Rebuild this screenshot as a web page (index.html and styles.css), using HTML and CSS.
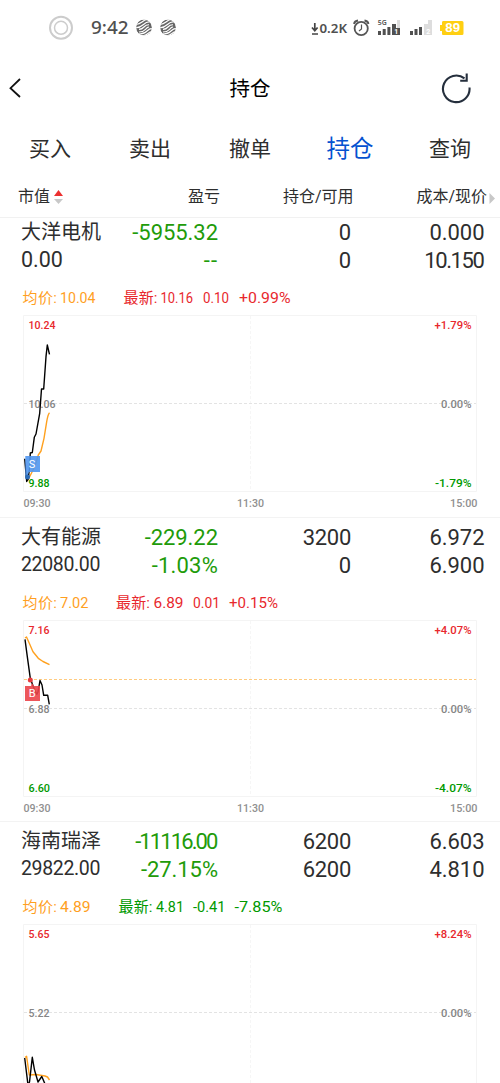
FILE: index.html
```html
<!DOCTYPE html>
<html lang="zh-CN">
<head>
<meta charset="utf-8">
<title>持仓</title>
<link rel="stylesheet" href="styles.css">
</head>
<body>
<main class="app">
  <header class="status">
    <svg width="500" height="56" viewBox="0 0 500 56">
      <defs>
        <clipPath id="globe"><circle r="8"/></clipPath>
        <g id="carrier" clip-path="url(#globe)">
          <circle r="8" fill="#666"/>
          <path d="M-9-3Q-5-3-2-5.500T4-8M-8 .2Q-4 .2-.5-3T6-5.500M-5 1.800Q-2 1.800 0-.5T5-2.700M-5 4.500Q-1 4.500 1.500 1.800T5-.2M-6 6.500Q0 6.500 3 3.500T9 1M-2 8.500Q2 8 4 6T8 4" fill="none" stroke="#fff" stroke-width="1.150"/>
        </g>
      </defs>
      <g fill="none" stroke="#ccc"><circle cx="61" cy="27.800" r="11" stroke-width="2"/><circle cx="61" cy="27.800" r="6.500" stroke-width="1.500"/></g>
      <text class="clock" x="91" y="34" textLength="37.500" lengthAdjust="spacingAndGlyphs">9:42</text>
      <use href="#carrier" x="144" y="27.500"/><use href="#carrier" x="168" y="27.500"/>
      <path d="M314.800 23v7M312 27.500l2.800 3.300 2.800-3.300M312 34h6" fill="none" stroke="#444" stroke-width="1.700"/>
      <text class="speed" x="319.500" y="32.700" textLength="27.500" lengthAdjust="spacingAndGlyphs">0.2K</text>
      <g fill="none" stroke="#555" stroke-width="1.800"><circle cx="361.200" cy="28.500" r="6.600"/><path d="M354 24q.5-3 4-3.500M368.500 24q-.5-3-4-3.500"/><path d="M361.500 24.500v4.500l-2.500 2" stroke-width="1.200"/></g>
      <text class="tiny" x="377.800" y="25" textLength="9" lengthAdjust="spacingAndGlyphs">5G</text>
      <path d="M378 31h3v4h-3zM382.700 29h3v6h-3zM387.400 27h3v8h-3zM392 24h4v4h4v7h-8z" fill="#505050"/>
      <path d="M397 20h3v8h-3z" fill="#ddd"/><text class="sim" x="394.200" y="33.700">1</text>
      <path d="M410 31h3v4h-3zM414.500 29h3v6h-3zM419 27h3v8h-3z" fill="#505050"/>
      <path d="M424 24h4v-4h4v15h-8z" fill="#ddd"/><text class="sim" x="426.200" y="34">2</text>
      <path d="M443 21h19q1.500 0 1.500 1.500v11q0 1.500-1.500 1.500h-19q-1 0-1-1.500v-2.500h-2v-6h2v-2.500q0-1.500 1-1.500z" fill="#ffcf12"/>
      <text class="battery" x="445.300" y="32.400" textLength="14.700" lengthAdjust="spacingAndGlyphs">89</text>
    </svg>
  </header>

  <div class="titlebar">
    <svg class="back" width="14" height="20" viewBox="0 0 14 20"><path d="M12 1L2.500 10.200 12 19" fill="none" stroke="#111" stroke-width="1.800"/></svg>
    <h1>持仓</h1>
    <svg class="refresh" width="32" height="32" viewBox="0 0 32 32"><path d="M29.500 15.500A13.300 13.300 0 1 1 24.500 6.400" fill="none" stroke="#252f3d" stroke-width="2.100"/><path d="M26.700 1.500v7.300h-6.500" fill="none" stroke="#252f3d" stroke-width="2.100"/></svg>
  </div>

  <nav class="tabs"><span>买入</span><span>卖出</span><span>撤单</span><span class="active">持仓</span><span>查询</span></nav>

  <div class="heads">
    <span class="h1c">市值<svg width="9" height="14" viewBox="0 0 9 14"><path d="M4.500 0L9 6H0z" fill="#ec3030"/><path d="M0 9h9l-4.500 5z" fill="#c8c8c8"/></svg></span>
    <span class="h2c">盈亏</span><span class="h3c">持仓/可用</span><span class="h4c">成本/现价</span>
    <svg class="more" width="6" height="11" viewBox="0 0 6 11"><path d="M.5 0L6 5.500.5 11z" fill="#c8c8c8"/></svg>
  </div>

  <div class="list">
    <section class="stock first">
      <div class="cells">
        <div class="name"><b>大洋电机</b><i class="large">0.00</i></div>
        <div class="num green"><span>-5955.32</span><span class="dashes">--</span></div>
        <div class="num"><span>0</span><span>0</span></div>
        <div class="num"><span>0.000</span><span class="many">10.150</span></div>
      </div>
      <svg class="chart" width="500" height="226" viewBox="0 -27 500 226">
        <g class="quote">
          <text class="orange" x="22.500" y="-12" textLength="34.500">均价:</text><text class="orange" x="60" y="-12" textLength="35.500" lengthAdjust="spacingAndGlyphs">10.04</text>
          <g class="red"><text x="123.500" y="-12" textLength="34">最新:</text><text x="160.500" y="-12" textLength="32.500" lengthAdjust="spacingAndGlyphs">10.16</text><text x="203" y="-12" textLength="26" lengthAdjust="spacingAndGlyphs">0.10</text><text x="239" y="-12" textLength="51.500" lengthAdjust="spacingAndGlyphs">+0.99%</text></g>
        </g>
        <path class="frame" d="M23.500.5h453v176h-453z"/>
        <path class="vgrid" d="M250.500 1v175"/><path class="mid" d="M24 88.500h452"/>
        <g class="axis">
          <text class="red" x="28.500" y="14" textLength="27" lengthAdjust="spacingAndGlyphs">10.24</text><text class="grey" x="28.500" y="93" textLength="27" lengthAdjust="spacingAndGlyphs">10.06</text><text class="green" x="28.500" y="172" textLength="21" lengthAdjust="spacingAndGlyphs">9.88</text>
          <text class="red" x="434.500" y="14" textLength="37" lengthAdjust="spacingAndGlyphs">+1.79%</text><text class="grey" x="441" y="93" textLength="30.500" lengthAdjust="spacingAndGlyphs">0.00%</text><text class="green" x="435" y="172" textLength="36.500" lengthAdjust="spacingAndGlyphs">-1.79%</text>
          <text class="time" x="23.500" y="192" textLength="27" lengthAdjust="spacingAndGlyphs">09:30</text><text class="time" x="237" y="192" textLength="27" lengthAdjust="spacingAndGlyphs">11:30</text><text class="time" x="450" y="192" textLength="27.500" lengthAdjust="spacingAndGlyphs">15:00</text>
        </g>
        <path class="avg" d="M26 156L28 165L32 157L35 151L38.300 140L41 136L44 123.300L46.700 106.700Q48 99 49.500 97.700"/>
        <path class="price" d="M24.700 143.700L26.700 166.500L28.200 164L29.500 153L30.300 138L32.300 137.500L34.300 122.300L36 119L39.700 98.300L41.500 74H43.700L46 41.700L47.300 30L49.500 39.300"/>
        <path d="M25.300 141h14.700v16H29l-1.500 3.500h-2.200z" fill="#5096ef" opacity=".9"/><circle cx="27.500" cy="162" r="2.500" fill="#2b6bb7"/><text class="badge" x="28.800" y="153.300">S</text>
      </svg>
    </section>

    <section class="stock">
      <div class="cells">
        <div class="name"><b>大有能源</b><i>22080.00</i></div>
        <div class="num green"><span>-229.22</span><span class="rate">-1.03%</span></div>
        <div class="num"><span class="qty">3200</span><span>0</span></div>
        <div class="num"><span>6.972</span><span>6.900</span></div>
      </div>
      <svg class="chart" width="500" height="226" viewBox="0 -27 500 226">
        <g class="quote">
          <text class="orange" x="22.500" y="-12" textLength="34.500">均价:</text><text class="orange" x="60" y="-12" textLength="28.500" lengthAdjust="spacingAndGlyphs">7.02</text>
          <g class="red"><text x="116" y="-12" textLength="34">最新:</text><text x="153.500" y="-12" textLength="30" lengthAdjust="spacingAndGlyphs">6.89</text><text x="193" y="-12" textLength="27" lengthAdjust="spacingAndGlyphs">0.01</text><text x="229" y="-12" textLength="49" lengthAdjust="spacingAndGlyphs">+0.15%</text></g>
        </g>
        <path class="frame" d="M23.500.5h453v176h-453z"/>
        <path class="vgrid" d="M250.500 1v175"/><path class="mid" d="M24 88.500h452"/><path class="cost" d="M24 59.500h452"/>
        <g class="axis">
          <text class="red" x="28.500" y="13.500" textLength="21" lengthAdjust="spacingAndGlyphs">7.16</text><text class="grey" x="28.500" y="93" textLength="21" lengthAdjust="spacingAndGlyphs">6.88</text><text class="green" x="28.500" y="172" textLength="21.500" lengthAdjust="spacingAndGlyphs">6.60</text>
          <text class="red" x="434.500" y="14" textLength="37" lengthAdjust="spacingAndGlyphs">+4.07%</text><text class="grey" x="441" y="93" textLength="30.500" lengthAdjust="spacingAndGlyphs">0.00%</text><text class="green" x="435" y="172" textLength="36.500" lengthAdjust="spacingAndGlyphs">-4.07%</text>
          <text class="time" x="23.500" y="192" textLength="27" lengthAdjust="spacingAndGlyphs">09:30</text><text class="time" x="237" y="192" textLength="27" lengthAdjust="spacingAndGlyphs">11:30</text><text class="time" x="450" y="192" textLength="27.500" lengthAdjust="spacingAndGlyphs">15:00</text>
        </g>
        <path class="avg" d="M25 18L26.500 17L29.300 23.300L33 31.700L38.300 38.300L43 41.500L49.500 44.700"/>
        <path class="price" d="M25 19.300L27.300 36.700L30.300 58.300L33.300 66.700L36.700 74.300L38 72L40 60.500L42 65L43.700 75.300H47.700L49.300 84.300"/>
        <circle cx="30.300" cy="60" r="2.500" fill="#e63a3e"/><path d="M25 66h6l1-3 2 3h6v15H25z" fill="#eb4449" opacity=".9"/><text class="badge" x="28.800" y="77.300">B</text>
      </svg>
    </section>

    <section class="stock">
      <div class="cells">
        <div class="name"><b>海南瑞泽</b><i>29822.00</i></div>
        <div class="num green"><span class="loss">-11116.00</span><span>-27.15%</span></div>
        <div class="num"><span class="qty">6200</span><span class="qty">6200</span></div>
        <div class="num"><span>6.603</span><span>4.810</span></div>
      </div>
      <svg class="chart" width="500" height="226" viewBox="0 -27 500 226">
        <g class="quote">
          <text class="orange" x="22.500" y="-12" textLength="34.500">均价:</text><text class="orange" x="60" y="-12" textLength="30.500" lengthAdjust="spacingAndGlyphs">4.89</text>
          <g class="green"><text x="118.500" y="-12" textLength="34">最新:</text><text x="156" y="-12" textLength="28" lengthAdjust="spacingAndGlyphs">4.81</text><text x="193" y="-12" textLength="32.500" lengthAdjust="spacingAndGlyphs">-0.41</text><text x="234.500" y="-12" textLength="48" lengthAdjust="spacingAndGlyphs">-7.85%</text></g>
        </g>
        <path class="frame" d="M23.500.5h453v176h-453z"/>
        <path class="vgrid" d="M250.500 1v175"/><path class="mid" d="M24 88.500h452"/>
        <g class="axis">
          <text class="red" x="28.500" y="13.500" textLength="21" lengthAdjust="spacingAndGlyphs">5.65</text><text class="grey" x="28.500" y="93" textLength="21" lengthAdjust="spacingAndGlyphs">5.22</text>
          <text class="red" x="434.500" y="14" textLength="37" lengthAdjust="spacingAndGlyphs">+8.24%</text><text class="grey" x="441" y="93" textLength="30.500" lengthAdjust="spacingAndGlyphs">0.00%</text>
        </g>
        <path class="avg" d="M25 133.500L26.600 132.300L29.300 151L36 150.500L45 152L47.500 153L49.500 156"/>
        <path class="price" d="M24.700 134L28 161L29.500 158L32.300 133.300L34.500 146L38 158L41.800 152.500L45 160"/>
      </svg>
    </section>
  </div>
</main>
</body>
</html>
```
FILE: styles.css
```css
* { box-sizing: border-box; }
body { margin: 0; background: #fff; color: #2e2e2e; font-family: Roboto, "Noto Sans CJK SC", sans-serif; }
svg { display: block; }
.app { width: 500px; height: 1083px; overflow: hidden; display: flex; flex-direction: column; }
.status { height: 56px; flex: none; }
.clock { font: 500 18.5px "Noto Sans", sans-serif; fill: #505050; }
.speed { font: 600 13px "Noto Sans", sans-serif; fill: #505050; }
.tiny { font: 600 7.5px "Noto Sans", sans-serif; fill: #505050; }
.sim { font: 700 7px Roboto, sans-serif; fill: #fff; }
.battery { font: 700 12px "Liberation Sans", sans-serif; fill: #fff; }

.titlebar { height: 65px; flex: none; display: grid; grid-template-columns: 100px 1fr 100px; align-items: center; padding: 0 0 0 8px; }
.titlebar h1 { margin: 0 8px 0 0; text-align: center; font-size: 20.5px; font-weight: 400; color: #000; line-height: 30px; }
.back { margin-bottom: 2px; }
.refresh { margin: 0 0 1px 40px; }

.tabs { height: 56px; flex: none; display: grid; grid-template-columns: repeat(5, 100px); align-items: center; text-align: center; font-size: 21px; line-height: 30px; }
.tabs .active { font-size: 23.5px; color: #0552d0; }

.heads { height: 41px; flex: none; display: grid; grid-template-columns: 100px 120px 133.5px 133.5px 13px; align-items: center; text-align: right; font-size: 16px; line-height: 24px; border-bottom: 1px solid #f1f1f1; }
.h1c { display: flex; align-items: center; gap: 4px; padding-left: 18px; }
.more { margin: 2px 0 0 2px; }

.list { flex: 1; min-height: 0; overflow: hidden; }
.stock { height: 304px; border-bottom: 1px solid #f3f3f3; }
.first { height: 305px; margin-top: -5px; }
.cells { height: 75px; display: grid; grid-template-columns: 110px 87px 133px 133.5px; padding: 5px 0 0 21px; }
.name b, .name i { display: block; font-weight: 400; font-style: normal; white-space: nowrap; line-height: 28px; }
.name b { font-size: 20px; }
.name i { font-size: 19.5px; letter-spacing: -.35px; }
.name .large { font-size: 21.5px; letter-spacing: 0; }
.num { display: flex; flex-direction: column; align-items: flex-end; padding-top: 1px; font-size: 22px; line-height: 28px; letter-spacing: -.05px; white-space: nowrap; }
.qty { letter-spacing: -.3px; }
.rate { letter-spacing: .2px; }
.dashes { letter-spacing: 1px; }
.many { letter-spacing: -1.4px; margin-right: 1px; }
.loss { letter-spacing: -1.9px; margin-right: 1.5px; }
.num.green { color: #219b09; }

.quote text { font-size: 15px; }
.axis text { font-size: 11.5px; font-weight: 500; }
text.red, .red text { fill: #e8282d; }
text.green, .green text { fill: #009900; }
text.orange { fill: #ff9f1f; }
text.grey { fill: #858585; }
text.time { fill: #909090; }
.frame { fill: none; stroke: #f4f4f4; }
.vgrid { stroke: #f6f6f6; stroke-dasharray: 3 2; }
.mid { stroke: #e3e3e3; stroke-dasharray: 3 2; }
.cost { stroke: #ffcb80; stroke-dasharray: 3 2; }
.avg { fill: none; stroke: #ffa11f; stroke-width: 1.4; stroke-linejoin: round; }
.price { fill: none; stroke: #000; stroke-width: 1.4; stroke-linejoin: round; }
.badge { font-size: 11px; fill: #fff; }
```
